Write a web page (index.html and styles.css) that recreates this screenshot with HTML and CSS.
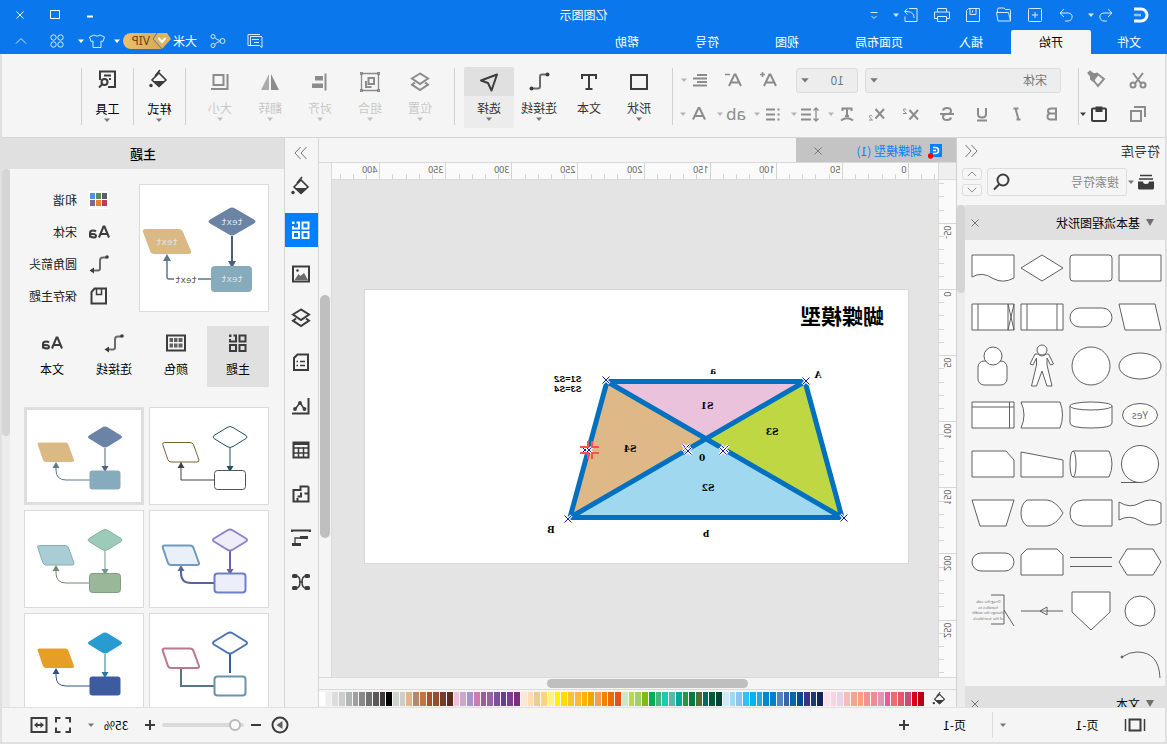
FILE: index.html
```html
<!DOCTYPE html>
<html lang="zh-CN">
<head>
<meta charset="utf-8">
<title>亿图图示</title>
<link rel="stylesheet" href="styles.css">
</head>
<body>
<svg class="sprite" aria-hidden="true">
  <symbol id="caret" viewBox="0 0 8 8"><path d="M1 2.500h6L4 6z" fill="currentColor"/></symbol>
  <symbol id="undo" viewBox="0 0 24 24"><path d="M10 6L6 10l4 4M6 10h8c6 0 5 8 0 8h-3"/></symbol>
  <symbol id="redo" viewBox="0 0 24 24"><path d="M14 6l4 4-4 4M18 10h-8c-6 0-5 8 0 8h3"/></symbol>
  <symbol id="new" viewBox="0 0 24 24"><rect x="5.500" y="5.500" width="13" height="13" rx="1"/><path d="M12 9v6M9 12h6"/></symbol>
  <symbol id="open" viewBox="0 0 24 24"><path d="M5.500 18V7.500q0-1 1-1h4l1.500-1.500h5q1.500 0 1.500 1.500V9.500M5.500 18l2-8.500H19.500l-1.500 8.500z"/></symbol>
  <symbol id="save" viewBox="0 0 24 24"><path d="M5.500 5.500h11l2 2v11h-13zM9 5.500v6h6v-6M12.500 7.500v2"/></symbol>
  <symbol id="print" viewBox="0 0 24 24"><path d="M7.500 9V5.500h9V9M7.500 15.500h-3v-6.500h15v6.500h-3M7.500 13.500h9v5h-9z"/></symbol>
  <symbol id="export" viewBox="0 0 24 24"><path d="M14 5.500H6v13h12v-5M9 15c0-5 3-6.500 9-6.500M15.500 5.500l3 3-3 3"/></symbol>
  <symbol id="more" viewBox="0 0 24 24"><path d="M8.500 9.500h7M9.500 13l2.500 2.500 2.500-2.500"/></symbol>
  <symbol id="msg" viewBox="0 0 24 24"><path d="M7 5.500h12v11h-3M5 8v10.500l2.500-2h9V7.500H5M8 10.500h7M8 13.500h5"/></symbol>
  <symbol id="share" viewBox="0 0 24 24"><circle cx="7.500" cy="12" r="2.500"/><circle cx="17" cy="7.500" r="2"/><circle cx="17" cy="16.500" r="2"/><path d="M10 11.500l3-1 2.300-2M10 12.500l3 1 2.300 2"/></symbol>
  <symbol id="shirt" viewBox="0 0 24 24"><path d="M9 6q3 2.500 6 0l4.500 2-1.500 4.500-2-.5v6.500h-8V12l-2 .5L4.500 8z"/></symbol>
  <symbol id="apps" viewBox="0 0 24 24"><circle cx="8.500" cy="8.500" r="2.700"/><circle cx="15.500" cy="8.500" r="2.700"/><circle cx="8.500" cy="15.500" r="2.700"/><circle cx="15.500" cy="15.500" r="2.700"/></symbol>
  <symbol id="up" viewBox="0 0 24 24"><path d="M7 14.500l5-5 5 5"/></symbol>
  <symbol id="down" viewBox="0 0 24 24"><path d="M7 9.500l5 5 5-5"/></symbol>
  <symbol id="min" viewBox="0 0 24 24"><path d="M9 13.500h6" stroke-width="2"/></symbol>
  <symbol id="max" viewBox="0 0 24 24"><path d="M7.500 7.500h9v8h-9z"/></symbol>
  <symbol id="close" viewBox="0 0 24 24"><path d="M8.500 8.500l7 7M15.500 8.500l-7 7"/></symbol>
  <symbol id="cut" viewBox="0 0 24 24"><circle cx="7" cy="17" r="2.500"/><circle cx="17" cy="17" r="2.500"/><path d="M9 15.500l8-10.500M15 15.500L7 5"/></symbol>
  <symbol id="copy" viewBox="0 0 24 24"><path d="M9 9h10v10H9zM5 15V5h11"/></symbol>
  <symbol id="brush" viewBox="0 0 24 24"><path d="M5 11l7-5.500 5 5L11 18z"/><path d="M13 6l3 0 3-2.500 1.500 1.500-2.500 3v3l-2 1.500-4-5z" fill="currentColor"/></symbol>
  <symbol id="paste" viewBox="0 0 24 24"><path d="M9 6.500H6q-1 0-1 1v10.500q0 1 1 1h12q1 0 1-1V7.500q0-1-1-1h-3"/><path d="M8.500 4.500h7V10h-7z" fill="currentColor" stroke="none"/></symbol>
  <symbol id="bold" viewBox="0 0 24 24"><path d="M8 6.500h5q3 0 3 2.500t-3 2.600H8zm0 5.100h5.500q3 0 3 3t-3 2.900H8z"/></symbol>
  <symbol id="italic" viewBox="0 0 24 24"><path d="M10.500 6.500h5M13.500 6.500l-3 11M8.500 17.500h4"/></symbol>
  <symbol id="uline" viewBox="0 0 24 24"><path d="M8 6v6q0 3.500 4 3.500t4-3.500V6M7 18.500h10"/></symbol>
  <symbol id="strike" viewBox="0 0 24 24"><path d="M16 8.500q-.5-2.500-4-2.500-4 0-4 3t4 3q4 0 4 3t-4 3q-3.500 0-4-2.500"/><path d="M5 12h14"/></symbol>
  <symbol id="sup" viewBox="0 0 24 24"><path d="M6 8l8.500 9.500M14.500 8L6 17.500"/><path d="M17.500 8q3-2.500 3 0 0 1-3 3.500h3.500" stroke-width="1"/></symbol>
  <symbol id="sub" viewBox="0 0 24 24"><path d="M5 7l8.500 9.500M13.500 7L5 16.500"/><path d="M16.500 14.500q3-2.500 3 0 0 1-3 3.500h3.500" stroke-width="1"/></symbol>
  <symbol id="tcurve" viewBox="0 0 24 24"><path d="M7.500 9V6.500h9V9M12 6.500V14M10 14h4M6 18.500q6-4.500 12 0"/></symbol>
  <symbol id="lsp" viewBox="0 0 24 24"><path d="M11 7.500h10M11 12.500h10M11 17.500h10"/><path d="M6 6v13M3.500 8.500L6 6l2.500 2.500M3.500 16.500L6 19l2.500-2.500" stroke-width="1.300"/></symbol>
  <symbol id="bullets" viewBox="0 0 24 24"><path d="M10 7.500h9M10 12.500h9M10 17.500h9M5.500 7.500h2M5.500 12.500h2M5.500 17.500h2"/></symbol>
  <symbol id="align" viewBox="0 0 24 24"><path d="M5 7h10M5 10.500h14M5 14h10M5 17.500h14"/></symbol>
  <symbol id="aplus" viewBox="0 0 24 24"><path d="M5 18L10.500 6.500h1L17 18M7 14.500h8"/><path d="M16 6.500h5M18.500 4v5" stroke-width="1.500"/></symbol>
  <symbol id="aminus" viewBox="0 0 24 24"><path d="M5 18L10.500 6.500h1L17 18M7 14.500h8"/><path d="M16 6.500h5" stroke-width="1.500"/></symbol>
  <symbol id="acol" viewBox="0 0 24 24"><path d="M6 17.500L11.500 6h1L18 17.500M8 14h8"/></symbol>
  <symbol id="rect" viewBox="0 0 24 24"><path d="M4 5h16v14H4z"/></symbol>
  <symbol id="tee" viewBox="0 0 24 24"><path d="M5 9V5h14v4M12 5v14M8.500 19h7"/></symbol>
  <symbol id="conn" viewBox="0 0 24 24"><path d="M4.500 4.500H9q2 0 2 2v10q0 2 2 2h5" opacity=".75"/><circle cx="3.500" cy="4.500" r="2" fill="currentColor" stroke="none"/><circle cx="19.500" cy="18.500" r="2" fill="currentColor" stroke="none"/></symbol>
  <symbol id="conna" viewBox="0 0 24 24"><path d="M5 5.500h3q3 0 3 3v8q0 2 2 2h4" opacity=".75"/><circle cx="4" cy="5" r="1.800" fill="currentColor" stroke="none"/><path d="M17 15.500l4.500 3-4.500 3z" fill="currentColor" stroke="none"/></symbol>
  <symbol id="send" viewBox="0 0 24 24"><path d="M4 4.500L20 10.500l-7 2.500-3.500 7.500z" stroke-linejoin="round"/></symbol>
  <symbol id="layers" viewBox="0 0 24 24"><path d="M12 3.500l8 5-8 5.500-8-5.500z"/><path d="M7 12.500l-3 2.200 8 5.300 8-5.300-3-2.200"/></symbol>
  <symbol id="group" viewBox="0 0 24 24"><path d="M3.500 3.500h17v17h-17z" stroke-width="1.300"/><path d="M2 2h3v3H2zM19 2h3v3h-3zM2 19h3v3H2zM19 19h3v3h-3z" fill="currentColor" stroke="none"/><path d="M8 8h5.500v6H8z"/><path d="M16 11v6h-5.500"/></symbol>
  <symbol id="alignr" viewBox="0 0 24 24"><path d="M6.500 3.500v17"/><path d="M9 6h8v4.500H9zM9 13.500h11V18H9z" fill="currentColor" stroke="none"/></symbol>
  <symbol id="flip" viewBox="0 0 24 24"><path d="M11 4v16H3z" fill="currentColor" stroke="none"/><path d="M13 4v16h8z" fill="currentColor" stroke="none" opacity=".7"/></symbol>
  <symbol id="size" viewBox="0 0 24 24"><path d="M8.500 5h10v10h-10z"/><path d="M4.500 4v15H21"/></symbol>
  <symbol id="bucket" viewBox="0 0 24 24"><path d="M12 6l7 7-7 6.500L5 13z" stroke-width="1.600"/><path d="M5.500 14h13L12 20z" fill="currentColor" stroke="none"/><path d="M11 3l5 6" stroke-width="1.600"/><circle cx="20" cy="18.500" r="1.700" fill="currentColor" stroke="none"/></symbol>
  <symbol id="tools" viewBox="0 0 24 24"><path d="M19 13V4.500H4V20h7M8 8.500h7M8 12h2"/><circle cx="14.500" cy="15" r="3"/><path d="M17 17.500l3 3"/></symbol>
  <symbol id="tray" viewBox="0 0 24 24"><path d="M6 5.500h12M5 9h14" stroke-width="1.500"/><path d="M4 11.500h5q0 2.500 3 2.500t3-2.500h5V18q0 1.500-1.500 1.500h-13Q4 19.500 4 18z" fill="currentColor" stroke="none"/></symbol>
  <symbol id="search" viewBox="0 0 24 24"><circle cx="11" cy="10" r="5.500"/><path d="M15 14.500l5 5"/></symbol>
  <symbol id="dbl" viewBox="0 0 24 24"><path d="M11.500 6l-5.500 6 5.500 6M17.500 6L12 12l5.500 6"/></symbol>
  <symbol id="dblr" viewBox="0 0 24 24"><path d="M6.500 6l5.500 6-5.500 6M12.500 6l5.500 6-5.500 6"/></symbol>
  <symbol id="grid4" viewBox="0 0 24 24"><path d="M4.500 4.500h6v6h-6zM4.500 14h6v6h-6zM14 14h6v6h-6z"/><path d="M20 8v2.500h-6v-6h2.500"/><path d="M18.500 3.500H21V6h-2.500z" fill="currentColor" stroke="none"/></symbol>
  <symbol id="image" viewBox="0 0 24 24"><path d="M4 4.500h16v15H4z"/><path d="M5 18l4-7 3.500 3 2-2 4 6z" fill="currentColor" stroke="none" opacity=".75"/><circle cx="15.500" cy="8.500" r="1.300" fill="currentColor" stroke="none"/></symbol>
  <symbol id="note" viewBox="0 0 24 24"><path d="M5 4.500h10.500L19 8v12H5z"/><path d="M8 11.500h5M8 15.500h5M15 11.500h1.500M15 15.500h1.500" stroke-width="1.500"/></symbol>
  <symbol id="chart" viewBox="0 0 24 24"><path d="M4.500 4v15.500H21"/><path d="M8.500 15.500l4.500-7 5 7" stroke-width="1.500"/><circle cx="8.500" cy="15" r="1.900" fill="currentColor" stroke="none"/><circle cx="13" cy="9" r="1.900" fill="currentColor" stroke="none"/><circle cx="18" cy="15" r="1.900" fill="currentColor" stroke="none"/></symbol>
  <symbol id="table" viewBox="0 0 24 24"><path d="M4.500 4.500h15v15h-15z"/><path d="M4.500 6h15" stroke-width="2"/><path d="M4.500 10h15M4.500 15h15M9.500 9v10M14.500 9v10" stroke-width="1.500"/></symbol>
  <symbol id="plan" viewBox="0 0 24 24"><path d="M4.500 4.500h8V8h7v11.500h-4V16M12.500 19.500h-8v-15M4.500 11.500h4M12 10.500v4h3.500M12.500 19.500H20"/></symbol>
  <symbol id="gantt" viewBox="0 0 24 24"><path d="M3 6V4.500h18V6"/><path d="M5 10h8v3H5zM12 17h9v3h-9z" fill="currentColor" stroke="none"/><path d="M13 12h5v6" stroke-width="1.300"/></symbol>
  <symbol id="mind" viewBox="0 0 24 24"><path d="M7 6q4 0 4 6t-4 6M17 6q-4 0-4 6t4 6M10 12h4" stroke-width="1.500"/><rect x="3" y="4" width="5.500" height="4" rx="1.500" fill="currentColor" stroke="none"/><rect x="15.500" y="4" width="5.500" height="4" rx="1.500" fill="currentColor" stroke="none"/><rect x="3" y="16" width="5.500" height="4" rx="1.500" fill="currentColor" stroke="none"/><rect x="15.500" y="16" width="5.500" height="4" rx="1.500" fill="currentColor" stroke="none"/></symbol>
  <symbol id="aa" viewBox="0 0 24 24"><path d="M2 17.500L6.500 6.500h1L12 17.500M4 14h6"/><path d="M15 11.500q1-1 3-1 3 0 3 2.500v4.500M21 14q-6-.5-6 1.700 0 1.800 2.300 1.800 3.700 0 3.700-3"/></symbol>
  <symbol id="swatch" viewBox="0 0 24 24"><path d="M2 3h20v18H2z" fill="#fff" stroke="none"/><g stroke="none"><path d="M4 5h5v6H4z" fill="#5b5f61"/><path d="M10 5h5v6h-5z" fill="#569062"/><path d="M16 5h5v6h-5z" fill="#4f92de"/><path d="M4 12h5v6H4z" fill="#b8405f"/><path d="M10 12h5v6h-5z" fill="#f57c2c"/><path d="M16 12h5v6h-5z" fill="#82668c"/></g></symbol>
  <symbol id="disk" viewBox="0 0 24 24"><path d="M5 4.500h11.500L19.500 8v11.500H5z"/><path d="M9.500 5v5.500h5V5" stroke-width="1.500"/></symbol>
  <symbol id="palette" viewBox="0 0 24 24"><path d="M3 4.500h18v15H3z"/><path d="M5.500 7h4v4h-4zM10.500 7h3.500v4h-3.500zM15 7h3.500v4H15zM5.500 12.500h4v4h-4zM10.500 12.500h3.500v4h-3.500zM15 12.500h3.500v4H15z" fill="currentColor" stroke="none" opacity=".8"/></symbol>
  <symbol id="pages" viewBox="0 0 24 24"><path d="M6.500 6.500h11v11h-11z"/><path d="M2.500 6v12M21.500 6v12" stroke-width="1.500"/></symbol>
  <symbol id="plus" viewBox="0 0 24 24"><path d="M7 12h10M12 7v10"/></symbol>
  <symbol id="minus" viewBox="0 0 24 24"><path d="M7 12h10"/></symbol>
  <symbol id="play" viewBox="0 0 24 24"><circle cx="12" cy="12" r="7.500"/><path d="M9.500 8v8l6-4z" fill="currentColor" stroke="none" opacity=".8"/></symbol>
  <symbol id="full" viewBox="0 0 24 24"><path d="M5 9.500V5h4.500M14.500 5H19v4.500M19 14.500V19h-4.500M9.500 19H5v-4.500"/></symbol>
  <symbol id="fit" viewBox="0 0 24 24"><path d="M4.500 5h15v14h-15zM8 12h8"/><path d="M10.500 9l-3.500 3 3.500 3zM13.500 9l3.500 3-3.500 3z" fill="currentColor" stroke="none"/></symbol>

  <symbol id="theme" viewBox="0 0 120 97">
    <g class="t-down"><path d="M39 40v19"/><path class="t-tip" d="M35.500 58h7L39 64z"/></g>
    <g class="t-side"><path class="t-round" d="M54 72h24q10 0 10-10v-4"/><path class="t-square" d="M54 72h34V54"/><path class="t-tip" d="M84.500 60h7L88 54z"/></g>
    <path class="t-dia" d="M36 19.500Q39 17.500 42 19.500L55 27.500Q57 29 55 30.500L42 38.500Q39 40.500 36 38.500L23 30.500Q21 29 23 27.500z"/>
    <rect class="t-box" x="23.500" y="62.500" width="31" height="19" rx="3"/>
    <path class="t-par" d="M79 34.500h25.500q2.500 0 1.700 2.300l-5 14.700q-.9 2.500-3.200 2.500H72q-2.700 0-1.800-2.500l5.300-14.700q.8-2.300 3.500-2.300z"/>
  </symbol>
</svg>

<div class="app">
  <header class="head">
    <div class="titlebar">
      <div class="quick">
        <span class="logo"><svg width="20" height="20" viewBox="0 0 20 20" fill="none" stroke="#fff"><path d="M17 4H10a6 6 0 000 12h7" stroke-width="3"/><path d="M10 10h7" stroke="#8fc3ff" stroke-width="2.500"/></svg></span>
        <button class="q q-tight" aria-label="撤销"><svg class="i"><use href="#undo"/></svg></button>
        <button class="c c-wide" aria-label="撤销列表"><svg><use href="#caret"/></svg></button>
        <button class="q q-redo" aria-label="重做"><svg class="i"><use href="#redo"/></svg></button>
        <button class="q" aria-label="新建"><svg class="i"><use href="#new"/></svg></button>
        <button class="q" aria-label="打开"><svg class="i"><use href="#open"/></svg></button>
        <button class="q" aria-label="保存"><svg class="i"><use href="#save"/></svg></button>
        <button class="q" aria-label="打印"><svg class="i"><use href="#print"/></svg></button>
        <button class="q" aria-label="导出"><svg class="i"><use href="#export"/></svg></button>
        <button class="c c-export" aria-label="导出选项"><svg><use href="#caret"/></svg></button>
        <button class="q" aria-label="更多"><svg class="i"><use href="#more"/></svg></button>
      </div>
      <div class="app-title">亿图图示</div>
      <div class="winbtns">
        <button aria-label="最小化"><svg class="i"><use href="#min"/></svg></button>
        <button aria-label="最大化"><svg class="i"><use href="#max"/></svg></button>
        <button aria-label="关闭"><svg class="i"><use href="#close"/></svg></button>
      </div>
    </div>
    <div class="menubar">
      <nav class="tabs">
        <button class="first">文件</button><button class="active">开始</button><button>插入</button><button>页面布局</button><button>视图</button><button>符号</button><button>帮助</button>
      </nav>
      <div class="account">
        <button aria-label="消息"><svg class="i"><use href="#msg"/></svg></button>
        <button class="share" aria-label="分享"><svg class="i"><use href="#share"/></svg></button>
        <span class="user">大米</span>
        <span class="vip"><svg width="18" height="16" viewBox="0 0 18 16"><path d="M4 0h10l4 6-9 10L0 6z" fill="#e2b35c"/><path d="M14 0l4 6-9 10" fill="none" stroke="#3d7cc4"/><path d="M5.500 5L9 9l3.500-4" fill="none" stroke="#fff" stroke-width="2"/></svg>VIP</span>
        <button class="c c-user" aria-label="账户"><svg><use href="#caret"/></svg></button>
        <button aria-label="皮肤"><svg class="i"><use href="#shirt"/></svg></button>
        <button class="c c-skin" aria-label="皮肤列表"><svg><use href="#caret"/></svg></button>
        <button aria-label="应用"><svg class="i"><use href="#apps"/></svg></button>
        <button aria-label="收起功能区" class="collapse"><svg class="i"><use href="#up"/></svg></button>
      </div>
    </div>
  </header>

  <section class="ribbon">
    <div class="clip">
      <div class="row"><button class="wide" aria-label="剪切"><svg class="i b"><use href="#cut"/></svg></button><button class="brush" aria-label="格式刷"><svg class="i b"><use href="#brush"/></svg></button></div>
      <div class="row"><button class="wide" aria-label="复制"><svg class="i b"><use href="#copy"/></svg></button><button class="paste" aria-label="粘贴"><svg class="i b"><use href="#paste"/></svg></button><button class="c paste" aria-label="粘贴选项"><svg><use href="#caret"/></svg></button></div>
    </div>
    <i class="sep"></i>
    <div class="font">
      <div class="row r1">
        <span class="pick pick-font"><select aria-label="字体"><option>宋体</option></select><svg><use href="#caret"/></svg></span>
        <span class="pick pick-size"><select aria-label="字号"><option>10</option></select><svg><use href="#caret"/></svg></span>
        <button class="f big" aria-label="增大字号"><svg class="i b"><use href="#aplus"/></svg></button>
        <button class="f" aria-label="减小字号"><svg class="i b"><use href="#aminus"/></svg></button>
        <button class="g" aria-label="对齐"><svg class="i b"><use href="#align"/></svg></button><button class="c" aria-label="对齐选项"><svg><use href="#caret"/></svg></button>
      </div>
      <div class="row r2">
        <button class="f" aria-label="粗体"><svg class="i b"><use href="#bold"/></svg></button>
        <button class="f" aria-label="斜体"><svg class="i b"><use href="#italic"/></svg></button>
        <button class="f" aria-label="下划线"><svg class="i b"><use href="#uline"/></svg></button>
        <button class="f" aria-label="删除线"><svg class="i b"><use href="#strike"/></svg></button>
        <button class="f" aria-label="上标"><svg class="i b"><use href="#sup"/></svg></button>
        <button class="f" aria-label="下标"><svg class="i b"><use href="#sub"/></svg></button>
        <button class="g g-first" aria-label="文字效果"><svg class="i b"><use href="#tcurve"/></svg></button><button class="c" aria-label="文字效果选项"><svg><use href="#caret"/></svg></button>
        <button class="g" aria-label="行距"><svg class="i b"><use href="#lsp"/></svg></button><button class="c" aria-label="行距选项"><svg><use href="#caret"/></svg></button>
        <button class="g" aria-label="项目符号"><svg class="i b"><use href="#bullets"/></svg></button><button class="c" aria-label="项目符号选项"><svg><use href="#caret"/></svg></button>
        <button class="g ab">ab</button><button class="c" aria-label="底纹"><svg><use href="#caret"/></svg></button>
        <button class="g" aria-label="字体颜色"><svg class="i b"><use href="#acol"/></svg></button><button class="c" aria-label="颜色选项"><svg><use href="#caret"/></svg></button>
      </div>
    </div>
    <i class="sep"></i>
    <div class="tools">
      <button><svg class="i b"><use href="#rect"/></svg><span>形状</span><svg class="cr"><use href="#caret"/></svg></button>
      <button><svg class="i b"><use href="#tee"/></svg><span>文本</span></button>
      <button><svg class="i b"><use href="#conn"/></svg><span>连接线</span><svg class="cr"><use href="#caret"/></svg></button>
      <button class="sel"><svg class="i b"><use href="#send"/></svg><span>选择</span><svg class="cr"><use href="#caret"/></svg></button>
    </div>
    <i class="sep"></i>
    <div class="tools off">
      <button><svg class="i b"><use href="#layers"/></svg><span>位置</span><svg class="cr"><use href="#caret"/></svg></button>
      <button><svg class="i b"><use href="#group"/></svg><span>组合</span><svg class="cr"><use href="#caret"/></svg></button>
      <button><svg class="i b"><use href="#alignr"/></svg><span>对齐</span><svg class="cr"><use href="#caret"/></svg></button>
      <button><svg class="i b"><use href="#flip"/></svg><span>翻转</span><svg class="cr"><use href="#caret"/></svg></button>
      <button><svg class="i b"><use href="#size"/></svg><span>大小</span><svg class="cr"><use href="#caret"/></svg></button>
    </div>
    <i class="sep"></i>
    <div class="tools one"><button><svg class="i b"><use href="#bucket"/></svg><span>样式</span><svg class="cr"><use href="#caret"/></svg></button></div>
    <i class="sep"></i>
    <div class="tools one"><button><svg class="i b"><use href="#tools"/></svg><span>工具</span><svg class="cr"><use href="#caret"/></svg></button></div>
    <i class="sep"></i>
  </section>

  <main class="work">
    <aside class="lib">
      <div class="lib-title"><span>符号库</span><button aria-label="收起符号库"><svg class="i"><use href="#dbl"/></svg></button></div>
      <div class="lib-search">
        <button class="tray" aria-label="符号库列表"><svg class="i b"><use href="#tray"/></svg></button><button class="c" aria-label="展开"><svg><use href="#caret"/></svg></button>
        <label class="field"><input type="text" aria-label="搜索符号" placeholder="搜索符号"><svg class="i b"><use href="#search"/></svg></label>
        <span class="spin"><button aria-label="上一个"><svg class="i"><use href="#up"/></svg></button><button aria-label="下一个"><svg class="i"><use href="#down"/></svg></button></span>
      </div>
      <div class="lib-body">
        <div class="lib-list">
          <div class="sect"><i class="tri"></i><span>基本流程图形状</span><button aria-label="关闭"><svg class="i"><use href="#close"/></svg></button></div>
          <div class="shapes">
            <svg><path d="M1 9h42v26H1z"/></svg>
            <svg><rect x="1" y="9" width="42" height="26" rx="3"/></svg>
            <svg><path d="M22 9l21 13-21 13L1 22z"/></svg>
            <svg><path d="M1 9h42v22q-10-6-21 1.500Q12 38 1 32z"/></svg>
            <svg><path d="M7 9h36l-6 26H1z"/></svg>
            <svg><rect x="1" y="13" width="42" height="19" rx="9.500"/></svg>
            <svg><path d="M1 9h42v26H1zM7 9v26M37 9v26"/></svg>
            <svg><path d="M1 9h42v26H1zM7 9v26M37 9v26M1 9l6 26M7 9L1 35"/></svg>
            <svg><ellipse cx="22" cy="22" rx="21" ry="13"/></svg>
            <svg><circle cx="22" cy="22" r="19"/></svg>
            <svg><circle cx="22" cy="6" r="5"/><path d="M18 10q4 4 8 0l3 0 5 10-3 1-3.500-7v7l5 21h-5L22 27l-5 15h-5l5-21v-7l-3.500 7-3-1 5-10z"/></svg>
            <svg><rect x="8" y="17" width="29" height="24" rx="6"/><circle cx="22" cy="12" r="9"/></svg>
            <svg><ellipse cx="22" cy="22" rx="17.500" ry="11.500"/><text x="22" y="26" class="yes">Yes</text></svg>
            <svg><path d="M1 13v17q0 5 21 5t21-5V13"/><ellipse cx="22" cy="13" rx="21" ry="4"/></svg>
            <svg><path d="M4 9h39q-6 13 0 26H4Q-1 22 4 9z"/></svg>
            <svg><path d="M1 9h42v26H1zM1 14h42M5.500 9v26"/></svg>
            <svg><circle cx="22" cy="22" r="18.500"/><path d="M22 40.500h19"/></svg>
            <svg><path d="M40 9H4Q-2 22 4 35h36"/><ellipse cx="40" cy="22" rx="3" ry="13"/></svg>
            <svg><path d="M1 18l42-8v25H1z"/></svg>
            <svg><path d="M9 9h34v26H1V18z"/></svg>
            <svg><path d="M1 12q11-6 21 0t21-1v18q-11-6-21 1T1 32z"/></svg>
            <svg><path d="M1 9h29q13 1 13 13T30 35H1z"/></svg>
            <svg><path d="M17 9h20q6 4 6 13t-6 13H17Q8 34 1 22 8 10 17 9z"/></svg>
            <svg><path d="M1 9h42l-8 26H9z"/></svg>
            <svg><path d="M9 9h26l8 13-8 13H9L1 22z"/></svg>
            <svg><path d="M1 17.500h42M1 26.500h42"/></svg>
            <svg><path d="M7 9h30l6 6v20H1V15z"/></svg>
            <svg><rect x="1" y="13" width="42" height="18" rx="9"/></svg>
            <svg><circle cx="22" cy="22" r="15"/></svg>
            <svg><path d="M3 3h38v20L22 41 3 23z"/></svg>
            <svg><path d="M1 22h42M17 18v8l7-4z"/></svg>
            <svg><path d="M24 6H11v29h13M11 21L1 37" fill="none"/><g class="tiny"><text x="27" y="14">Drag the side</text><text x="27" y="20">handles to</text><text x="27" y="25">change the width</text><text x="27" y="31">of the text block.</text></g></svg>
            <svg><path d="M2 40q1-26 23-26 8 0 15 5" fill="none"/><circle cx="40" cy="19" r="1" fill="#555"/></svg>
          </div>
          <div class="sect"><i class="tri"></i><span>文本</span><button aria-label="关闭"><svg class="i"><use href="#close"/></svg></button></div>
        </div>
        <div class="track"><i class="thumb t-lib"></i></div>
      </div>
    </aside>

    <section class="center">
      <div class="doctabs"><div class="doctab"><svg width="16" height="16" viewBox="0 0 16 16"><path d="M2 1h12v13H2z" fill="#0a80ff"/><path d="M11 4.500H8.500a3 3 0 000 6H11M8 7.500h3" fill="none" stroke="#fff" stroke-width="1.500"/><circle cx="13.500" cy="13" r="2.700" fill="red"/></svg><span>蝴蝶模型 (1)</span><button aria-label="关闭文档"><svg class="i"><use href="#close"/></svg></button></div></div>
      <div class="stage">
        <div class="corner"></div>
        <svg class="hruler" id="hruler"></svg>
        <svg class="vruler" id="vruler"></svg>
        <div class="canvas">
          <svg class="page" width="543" height="273" viewBox="0 0 543 273">
            <path d="M202 148L103 91H301z" fill="#ebc2db"/>
            <path d="M202 148L338 228H66z" fill="#a0d9ef"/>
            <path d="M103 91L202 148 66 228z" fill="#bfd743"/>
            <path d="M301 91L202 148 338 228z" fill="#deb887"/>
            <path d="M103 91.500H301L338 227.500H66zM103 91.500L338 227.500M301 91.500L66 227.500" fill="none" stroke="#0070c0" stroke-width="5"/>
            <text class="doc-title" x="24" y="34">蝴蝶模型</text>
            <g class="lab">
              <text x="90" y="88">A</text><text x="195" y="84">a</text><text x="201" y="119">S1</text><text x="136" y="145">S3</text><text x="278" y="162">S4</text><text x="206" y="171">0</text><text x="200" y="201">S2</text><text x="202" y="247">b</text><text x="357" y="243">B</text>
              <g class="eq"><text x="340" y="92">S1=S2</text><text x="340" y="102">S3=S4</text></g>
            </g>
            <g id="marks"></g>
            <g fill="none" stroke="#ff5050" stroke-width="2"><path d="M316 151v6h-7M320 151v6h8M316 169v-6h-7M320 169v-6h8"/></g>
          </svg>
        </div>
        <div class="vbar"><i></i></div>
        <div class="hbar"><i></i></div>
      </div>
      <div class="colors"><button aria-label="填充"><svg class="i b"><use href="#bucket"/></svg></button><div class="sw" id="sw"></div></div>
    </section>

    <nav class="side">
      <button class="dbl" aria-label="收起"><svg class="i"><use href="#dblr"/></svg></button>
      <button aria-label="样式"><svg class="i b"><use href="#bucket"/></svg></button>
      <button class="on" aria-label="主题"><svg class="i b"><use href="#grid4"/></svg></button>
      <button aria-label="图片"><svg class="i b"><use href="#image"/></svg></button>
      <button aria-label="图层"><svg class="i b"><use href="#layers"/></svg></button>
      <button aria-label="备注"><svg class="i b"><use href="#note"/></svg></button>
      <button aria-label="图表"><svg class="i b"><use href="#chart"/></svg></button>
      <button aria-label="表格"><svg class="i b"><use href="#table"/></svg></button>
      <button aria-label="平面图"><svg class="i b"><use href="#plan"/></svg></button>
      <button aria-label="甘特图"><svg class="i b"><use href="#gantt"/></svg></button>
      <button aria-label="思维导图"><svg class="i b"><use href="#mind"/></svg></button>
    </nav>

    <aside class="theme">
      <h2>主题</h2>
      <div class="theme-body">
        <div class="theme-main">
          <div class="top">
            <div class="preview"><svg width="128" height="126" viewBox="0 0 128 126">
              <path d="M36 51v26" stroke="#4a5f78" stroke-width="2"/><path d="M32 76h8l-4 7z" fill="#4a5f78"/>
              <path d="M57 94h42q2 0 2-2V76" fill="none" stroke="#5a7a8a" stroke-width="1.500"/><path d="M97 76h8l-4-7z" fill="#5a7a8a"/><path d="M70 88h24v12H70z" fill="#fff"/>
              <path d="M33 23.500q3-2 6 0L58 34.500q3 2 0 4L39 49.500q-3 2-6 0L14 38.500q-3-2 0-4z" fill="#6b84a6"/>
              <rect x="16" y="81" width="41" height="26" rx="4" fill="#86abbd"/>
              <path d="M90 44h32q4 0 3 3l-7 19q-1 3-4 3H80q-4 0-3-3l8-19q1-3 5-3z" fill="#dbb985"/>
              <g class="pv"><text x="36" y="40">text</text><text x="36" y="97">text</text><text x="101" y="60">text</text><text class="dk" x="82" y="98">text</text></g>
            </svg></div>
            <div class="opts">
              <button><svg class="i b"><use href="#swatch"/></svg>和谐</button>
              <button><svg class="i b"><use href="#aa"/></svg>宋体</button>
              <button><svg class="i b"><use href="#conna"/></svg>圆角箭头</button>
              <button><svg class="i b"><use href="#disk"/></svg>保存主题</button>
            </div>
          </div>
          <div class="kinds">
            <button class="on"><svg class="i b"><use href="#grid4"/></svg>主题</button>
            <button><svg class="i b"><use href="#palette"/></svg>颜色</button>
            <button><svg class="i b"><use href="#conna"/></svg>连接线</button>
            <button><svg class="i b"><use href="#aa"/></svg>文本</button>
          </div>
          <div class="cards">
            <button class="card k1" aria-label="主题 1"><svg><use href="#theme"/></svg></button>
            <button class="card k2 picked" aria-label="主题 2"><svg><use href="#theme"/></svg></button>
            <button class="card k3" aria-label="主题 3"><svg><use href="#theme"/></svg></button>
            <button class="card k4" aria-label="主题 4"><svg><use href="#theme"/></svg></button>
            <button class="card k5" aria-label="主题 5"><svg><use href="#theme"/></svg></button>
            <button class="card k6" aria-label="主题 6"><svg><use href="#theme"/></svg></button>
          </div>
        </div>
        <div class="track"><i class="thumb t-theme"></i></div>
      </div>
    </aside>
  </main>

  <footer class="status">
    <button class="pgs" aria-label="页面列表"><svg class="i b"><use href="#pages"/></svg></button>
    <button class="pgname">页-1</button>
    <button class="c pgcaret" aria-label="页面"><svg><use href="#caret"/></svg></button>
    <button class="pgtab">页-1</button>
    <button class="n add" aria-label="添加页面"><svg class="i b"><use href="#plus"/></svg></button>
    <div class="zoom">
      <button class="n" aria-label="演示"><svg class="i b"><use href="#play"/></svg></button>
      <button class="n" aria-label="缩小"><svg class="i b"><use href="#minus"/></svg></button>
      <input type="range" min="0" max="100" value="5" aria-label="缩放">
      <button class="n" aria-label="放大"><svg class="i b"><use href="#plus"/></svg></button>
      <span class="pct">35%</span>
      <button class="c" aria-label="缩放比例"><svg><use href="#caret"/></svg></button>
      <button class="n fs" aria-label="全屏"><svg class="i b"><use href="#full"/></svg></button>
      <button class="n" aria-label="适合窗口"><svg class="i b"><use href="#fit"/></svg></button>
    </div>
  </footer>
</div>
<script src="app.js"></script>
</body>
</html>
```

FILE: styles.css
```css
* { box-sizing: border-box; }
body { margin: 0; overflow: hidden; font: 12px/16px "Noto Sans CJK SC", sans-serif; color: #000; background: #e0e0e0; }
button { border: 0; padding: 0; margin: 0; background: none; font: inherit; color: inherit; display: flex; align-items: center; justify-content: center; flex: none; }
.sprite { display: none; }
.app { height: 100vh; display: flex; flex-direction: column; background: #f5f5f5; transform: scaleX(-1); border-bottom: 2px solid #e0e0e0; overflow: hidden; }
.i { width: 24px; height: 24px; flex: none; fill: none; stroke: currentColor; stroke-width: 1; }
.b { stroke-width: 2; }
.c { width: 8px; }
.c svg, .cr { width: 8px; height: 8px; flex: none; }
.c-wide { width: 12px; }

.head { background: #0a78ec; color: #d6e9ff; }
.titlebar { display: grid; grid-template-columns: 1fr auto 1fr; height: 30px; align-items: center; }
.quick { display: flex; align-items: center; }
.logo { width: 52px; display: flex; justify-content: center; }
.q { width: 31px; }
.q-tight { width: 18px; }
.q-redo { margin-left: 3px; }
.c-export { margin: 0 2px 0 -4px; }
.app-title { color: #fff; }
.winbtns { display: flex; justify-content: flex-end; color: #fff; padding-right: 3px; }
.winbtns button { width: 35px; }
.menubar { display: flex; justify-content: space-between; height: 24px; }
.tabs { display: flex; color: #fff; }
.tabs button { padding: 0 28px; height: 24px; }
.tabs .first { padding: 0 26px; }
.tabs .active { background: #f5f5f5; color: #000; border-radius: 2px 2px 0 0; }
.account { display: flex; align-items: center; padding: 0 9px 2px 0; }
.account button { width: 24px; }
.account .c { width: 8px; color: #fff; }
.account .c-user { margin-right: 4px; }
.account .c-skin { margin-right: 8px; }
.account .share { margin: 0 9px 0 13px; }
.user { color: #fff; }
.account .collapse { margin-left: 12px; }
.vip { display: flex; align-items: center; gap: 3px; width: 48px; height: 16px; margin: 0 2px; border-radius: 0 8px 8px 0; background: linear-gradient(90deg, transparent 10px, #d9aa56 10px, #edc06a); color: #6b4410; font: 12px/16px "Noto Sans", sans-serif; }

.ribbon { display: flex; height: 84px; border: solid #e0e0e0; border-width: 0 2px; box-shadow: inset 0 -1px #d5d5d5; padding-top: 9px; color: #8c8c8c; flex: none; }
.sep { width: 1px; height: 57px; margin-top: 5px; background: #d0d0d0; flex: none; }
.row { display: flex; height: 34px; align-items: center; }
.clip { width: 86px; }
.wide { width: 54px; }
.brush { width: 28px; }
.paste { color: #3c3c3c; }
.font { width: 405px; }
.r1 { padding-left: 17px; }
.r2 { padding-left: 8px; }
.pick { position: relative; height: 25px; margin-right: 7px; }
.pick select { appearance: none; width: 100%; height: 100%; border: 1px solid #dcdcdc; border-radius: 3px; background: #ededed; color: #777; font: inherit; padding: 0 13px; }
.pick svg { position: absolute; right: 4px; top: 7px; width: 10px; height: 10px; color: #777; }
.pick-font { width: 196px; }
.pick-size { width: 62px; }
.f { width: 35px; }
.big { margin-left: 2px; }
.g { width: 24px; margin-left: 5px; }
.g-first { margin-left: 1px; }
.ab { font: 17px/20px "Noto Sans", sans-serif; }
.font .c { color: #b5b5b5; }
.tools { display: flex; padding: 0 9px 0 8px; color: #3c3c3c; }
.tools button { flex-direction: column; justify-content: flex-start; width: 50px; height: 61px; margin-top: 4px; padding-top: 3px; }
.tools span { line-height: 16px; margin-top: 6px; color: #333; }
.tools .cr { margin-top: -1px; color: #777; }
.tools .sel { background: linear-gradient(#e0e0e0 29px, #ececec 29px); border-radius: 2px; }
.off { color: #8c8c8c; padding: 0 9px; }
.off span { color: #c8c8c8; }
.off .cr { color: #c0c0c0; }
.one { padding: 0; }
.one button { width: 51px; padding-top: 0; }
.one span { margin-top: 10px; color: #000; }

.work { flex: 1; min-height: 0; display: flex; border: solid #e0e0e0; border-width: 0 2px; }
.lib { width: 209px; flex: none; display: flex; flex-direction: column; border-right: 1px solid #d0d0d0; }
.lib-title { display: flex; justify-content: space-between; align-items: center; height: 26px; padding: 0 2px 0 5px; font-size: 13px; color: #333; flex: none; }
.lib-title svg { color: #777; }
.lib-search { display: flex; align-items: center; height: 41px; padding: 0 5px 5px 8px; flex: none; }
.lib-search .c { color: #777; }
.tray { width: 22px; color: #3c3c3c; }
.field { display: flex; align-items: center; flex: 1; min-width: 0; margin-right: 5px; height: 28px; border: 1px solid #dcdcdc; border-radius: 3px; }
.field input { flex: 1; min-width: 0; border: 0; background: none; font: inherit; padding: 0 0 0 7px; outline: 0; }
.field input::placeholder { color: #888; opacity: 1; }
.field svg { margin-right: 2px; color: #3c3c3c; }
.spin { display: flex; flex-direction: column; gap: 4px; }
.spin button { width: 20px; height: 12px; border: 1px solid #dcdcdc; border-radius: 3px; color: #777; }
.spin svg { width: 20px; height: 20px; }
.lib-body { flex: 1; min-height: 0; display: flex; }
.lib-list { flex: 1; overflow: hidden; }
.sect { display: flex; align-items: center; height: 35px; background: #e0e0e0; padding: 0 0 0 11px; }
.sect span { flex: 1; margin-left: 6px; }
.sect button { width: 20px; color: #777; }
.tri { border: solid transparent; border-width: 7px 4px 0; border-top-color: #6e6e6e; }
.shapes { display: grid; grid-template-columns: repeat(4, 49px); grid-auto-rows: 49px; padding: 4px 0 1px; }
.shapes svg { width: 44px; height: 44px; margin: 2px 3px; overflow: visible; fill: #fff; stroke: #606060; stroke-width: 1; }
.shapes text { fill: #666; stroke: none; text-anchor: middle; font: 10px "Open Sans", sans-serif; }
.shapes .tiny text { font-size: 4px; }
.track { width: 8px; background: #ececec; flex: none; }
.thumb { display: block; border-radius: 4px; background: #d5d5d5; }
.t-lib { height: 88px; }
.t-theme { height: 267px; }

.center { flex: 1; min-width: 0; display: flex; flex-direction: column; }
.doctabs { height: 24px; flex: none; }
.doctab { display: flex; align-items: center; width: 160px; height: 24px; padding: 2px 10px 0 12px; background: #c4c4c4; color: #0a80ff; }
.doctab span { flex: 1; margin-left: 6px; }
.doctab button { color: #777; }
.stage { flex: 1; min-height: 0; display: grid; grid-template: 18px minmax(0, 1fr) 13px / 18px minmax(0, 1fr) 13px; }
.corner { background: #efefef; border: solid #dadada; border-width: 1px 1px 1px 0; }
.hruler { width: 100%; height: 18px; background: #fafafa; border: solid #dadada; border-width: 1px 0; overflow: hidden; }
.vruler { width: 18px; height: 100%; background: #fafafa; border-right: 1px solid #dadada; overflow: hidden; }
.hruler path, .vruler path { stroke: #d5d5d5; fill: none; }
.hruler text, .vruler text { font: 9px "Noto Sans", sans-serif; fill: #666; }
.canvas { background: #e4e4e4; overflow: hidden; padding: 110px 0 0 30px; }
.page { display: block; background: #fff; outline: 1px solid #d8d8d8; }
.doc-title { font: bold 21px "Noto Sans CJK SC", sans-serif; }
.lab text { font: bold 9px "DejaVu Serif", serif; text-anchor: middle; }
.lab .eq text { font: italic bold 9px "Liberation Sans", sans-serif; }
.vbar { grid-area: 1 / 3 / 3 / 4; border: solid #dadada; border-width: 1px 0 0 1px; padding: 132px 1px 0; }
.vbar i { display: block; height: 243px; border-radius: 5px; background: #bfbfbf; }
.hbar { grid-area: 3 / 1 / 4 / 4; border: solid #dadada; border-width: 1px 0; padding: 1px 228px 1px 208px; }
.hbar i { display: block; height: 9px; border-radius: 5px; background: #bfbfbf; }
.colors { display: flex; align-items: center; height: 17px; color: #3c3c3c; flex: none; }
.colors button { width: 32px; height: 16px; }
.colors .i { width: 17px; height: 17px; }
.sw { flex: 1; display: flex; gap: 1px; height: 14px; }
.sw i { flex: 1; }

.side { width: 35px; flex: none; border: solid #d5d5d5; border-width: 0 1px; color: #3c3c3c; display: flex; flex-direction: column; gap: 10px; }
.side button { width: 33px; height: 34px; }
.side .dbl { height: 21px; margin-top: 4px; color: #777; }
.side .on { background: #007fff; color: #fff; }
.side .dbl + button { margin-top: -4px; }

.theme { width: 282px; flex: none; display: flex; flex-direction: column; }
.theme h2 { margin: 0; height: 31px; font: 500 13px/31px "Noto Sans CJK SC", sans-serif; text-align: center; background: #e0e0e0; flex: none; }
.theme-body { flex: 1; min-height: 0; display: flex; }
.theme-main { flex: 1; overflow: hidden; padding: 15px 0 0 15px; }
.top { display: flex; }
.preview { width: 130px; height: 128px; border: 1px solid #dadada; background: #fff; }
.pv text { font: 9px "DejaVu Sans Mono", monospace; fill: #dde4ea; text-anchor: middle; }
.pv .dk { fill: #555; }
.opts { margin-left: 28px; color: #3c3c3c; }
.opts button { height: 32px; gap: 10px; color: #222; }
.kinds { display: flex; margin: 14px 0 20px; }
.kinds button { width: 62px; height: 61px; flex-direction: column; justify-content: flex-start; gap: 6px; padding-top: 5px; color: #000; }
.kinds .i, .opts .i { color: #3c3c3c; }
.kinds .on { background: #e0e0e0; }
.cards { display: grid; grid-template-columns: 120px 120px; grid-auto-rows: 98px; gap: 5px; }
.card { border: 1px solid #dadada; background: #fff; overflow: hidden; }
.card svg { width: 120px; height: 97px; flex: none; }
.picked { border: 3px solid #dedede; }
.t-dia { fill: var(--df); stroke: var(--ds); stroke-width: var(--w); }
.t-box { fill: var(--bf); stroke: var(--bs); stroke-width: var(--w); }
.t-par { fill: var(--pf); stroke: var(--ps); stroke-width: var(--w); }
.t-down { stroke: var(--dc); fill: none; stroke-width: var(--l); }
.t-side { stroke: var(--sc); fill: none; stroke-width: var(--l); }
.t-down .t-tip { fill: var(--dc); stroke: none; opacity: var(--tip, 1); }
.t-side .t-tip { fill: var(--sc); stroke: none; opacity: var(--tip, 1); }
.t-round { opacity: var(--r, 1); }
.t-square { opacity: var(--q, 0); }
.k1 { --df: #fff; --ds: #1e5266; --bf: #fff; --bs: #555; --pf: #fff; --ps: #7a6432; --dc: #1e5266; --sc: #444; --w: 1; --l: 1; --r: 0; --q: 1; }
.k2 { --df: #6b84a6; --ds: #6b84a6; --bf: #86abbd; --bs: #86abbd; --pf: #dbb985; --ps: #dbb985; --dc: #4f6480; --sc: #5a7a8a; --w: 0; --l: 1; }
.k3 { --df: #efedfa; --ds: #8f83cf; --bf: #eceffa; --bs: #6a80c8; --pf: #eaf0f9; --ps: #6f9ac8; --dc: #6a62a5; --sc: #53669f; --w: 2; --l: 2; }
.k4 { --df: #9dcbba; --ds: #86b0a0; --bf: #99b899; --bs: #7f9f80; --pf: #aaccd5; --ps: #8aacb4; --dc: #6f9788; --sc: #6d8a6c; --w: 1; --l: 1; }
.k5 { --df: #fff; --ds: #4b72b5; --bf: #fff; --bs: #6b93ac; --pf: #fff; --ps: #bd7789; --dc: #3f5a97; --sc: #567787; --w: 2; --l: 2; --r: 0; --q: 1; --tip: 0; }
.k6 { --df: #289bd0; --ds: #289bd0; --bf: #3c5c9f; --bs: #3c5c9f; --pf: #e69f26; --ps: #e69f26; --dc: #26789f; --sc: #324f8f; --w: 0; --l: 1; }

.status { display: flex; align-items: center; height: 35px; flex: none; border: solid #e0e0e0; border-width: 1px 2px 0; color: #3c3c3c; }
.status .c { color: #777; }
.pgs { width: 60px; }
.pgname, .pgtab { color: #000; }
.pgname { margin-left: 6px; width: 24px; }
.pgcaret { width: 20px; margin-left: 62px; }
.pgtab { border-left: 1px solid #dadada; height: 26px; padding: 0 27px 0 26px; }
.n { width: 24px; }
.zoom { margin-left: auto; display: flex; align-items: center; padding-right: 25px; }
.zoom input { appearance: none; width: 82px; height: 4px; border-radius: 2px; margin: 0; background: #dadada; }
.zoom input::-webkit-slider-thumb { appearance: none; width: 12px; height: 12px; border-radius: 50%; border: 2px solid #b8b8b8; background: #fff; }
.pct { color: #000; margin: 0 9px 0 10px; }
.zoom .fs { margin-left: 12px; }
```

FILE: app.js
```js
const NS = 'http://www.w3.org/2000/svg';
function add(parent, tag, attrs, text) {
  const el = document.createElementNS(NS, tag);
  for (const k in attrs) el.setAttribute(k, attrs[k]);
  if (text !== undefined) el.textContent = text;
  parent.appendChild(el);
}

// One ruler step is 10 units; every fifth step is labelled.
const STEP = 13.22;
function ruler(id, origin, from, to, vertical) {
  const svg = document.getElementById(id);
  for (let n = from; n <= to; n++) {
    const p = Math.floor(origin + n * STEP) + 0.5;
    const major = n % 5 === 0;
    if (vertical) {
      add(svg, 'path', { d: 'M' + (major ? 0 : 12) + ' ' + p + 'H18' });
      if (major) add(svg, 'text', { transform: 'translate(12 ' + (p + 2) + ') rotate(-90)', 'text-anchor': 'end' }, n * 10);
    } else {
      add(svg, 'path', { d: 'M' + p + ' ' + (major ? 0 : 11) + 'V16' });
      if (major) add(svg, 'text', { x: p + 2, y: 10 }, n * 10);
    }
  }
}
ruler('hruler', 29.5, -2, 44, false);
ruler('vruler', 109.5, -8, 29, true);

const marks = document.getElementById('marks');
[[102, 91], [302, 90], [340, 229], [64, 228], [222, 158], [220, 161], [183, 159], [185, 161], [323, 160], [319, 160]].forEach(([x, y]) => {
  const d = `M${x - 3.5} ${y - 3.5}l7 7m0-7l-7 7`;
  add(marks, 'path', { d, stroke: '#fff', 'stroke-width': 3 });
  add(marks, 'path', { d, stroke: '#1414c8', 'stroke-width': 1 });
});

const colors = ('b80013 db0017 c84e78 e95468 ef6a70 e75b9b e195b5 f08a94 f39196 ff9f7c efa88f f5bdb8 e9d3e8 fdd3e2 fde0e8 ' +
  '132455 223870 3c3380 034a8f 0068a9 3f61ad 5483c3 0080cf 0088cf 2aa7df 00b5ef 2ac4f8 8dc3ee a0d9ef cfe9f5 ' +
  '004637 005b35 006a61 566b35 007a43 22983f 00ac97 5ab8a8 1bcbb0 49b47f 00ae56 80bb12 a4d165 bbd943 cde7cb ' +
  'e6501f ed6c00 f08300 f59c55 f3a600 ffb000 ffb836 f8c136 ffdb00 fff100 fff183 ffd47a eacb9a ffddb0 fde8d3 ' +
  '7a2f78 7d3f8c 663f95 79529b 9664a0 a25a93 cb7cb4 a894cd c7a9cb ebc2db ' +
  '5c2c1c 773a32 94502a a65328 c17540 b28870 deb887 d3cbc6 cbd5cd ' +
  '000000 3e3a39 595757 6f7170 888888 a0a0a0 b4b6b6 cccccc dcdcdc eeeeee ffffff').split(' ');
const sw = document.getElementById('sw');
colors.forEach(c => {
  const i = document.createElement('i');
  i.style.background = '#' + c;
  sw.appendChild(i);
});
```
